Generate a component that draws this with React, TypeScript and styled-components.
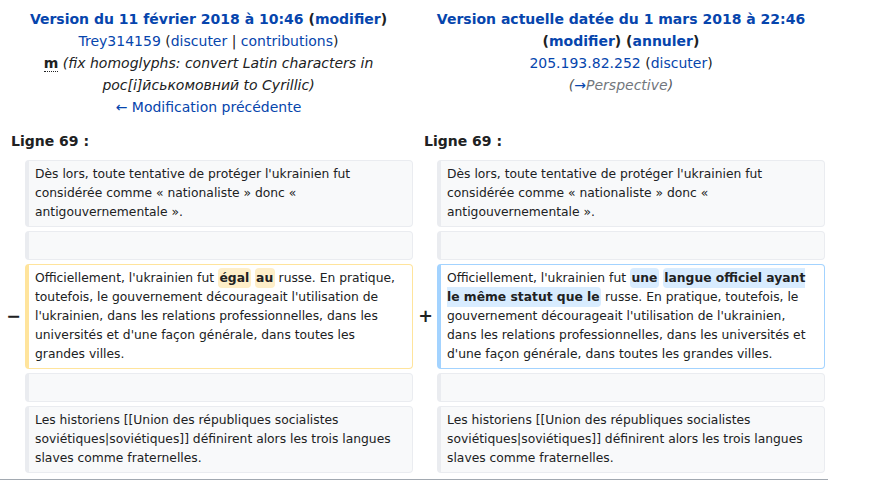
import * as React from "react";
import styled, { createGlobalStyle } from "styled-components";

const GlobalStyle = createGlobalStyle`
  html, body {
    margin: 0;
    padding: 0;
    background: #ffffff;
  }
  body {
    font-family: "DejaVu Sans", "Noto Sans", sans-serif;
    color: #202122;
  }
`;

type LineKind = "context" | "deleted" | "added";

const palette: Record<LineKind, { border: string; accent: string; bg: string; mark: string }> = {
  context: { border: "#eaecf0", accent: "#eaecf0", bg: "#f8f9fa", mark: "transparent" },
  deleted: { border: "#ffe49c", accent: "#ffe49c", bg: "#ffffff", mark: "#feeec8" },
  added: { border: "#a3d3ff", accent: "#a3d3ff", bg: "#ffffff", mark: "#d8ecff" },
};

const DiffGrid = styled.div`
  width: 829px;
  box-sizing: border-box;
  padding: 8px 4px 0;
  display: grid;
  grid-template-columns: 17px 1fr 16px 1fr;
  column-gap: 4px;
  row-gap: 4px;
  align-items: center;
`;

const TitleCell = styled.div`
  grid-column: span 2;
  align-self: start;
  text-align: center;
  font-size: 14px;
  line-height: 22px;
`;

const TitleLine = styled.div`
  display: block;
`;

const Link = styled.a`
  color: #0645ad;
  text-decoration: none;
  cursor: pointer;
`;

const Strong = styled.strong`
  font-weight: bold;
`;

const Minor = styled.abbr`
  font-weight: bold;
  text-decoration: none;
  border-bottom: 1px dotted #202122;
`;

const Comment = styled.span<{ $muted?: boolean }>`
  font-style: italic;
  color: ${(p) => (p.$muted ? "#54595d" : "#202122")};
`;

const AutoComment = styled.span`
  color: #72777d;
`;

const LineNumber = styled.div`
  grid-column: span 2;
  padding: 8px 7px 4px;
  font-size: 14px;
  line-height: 22px;
  font-weight: bold;
`;

const Marker = styled.div`
  text-align: right;
  font-weight: bold;
  font-size: 17.5px;
  line-height: 1.2;
`;

const LineBox = styled.div<{ $kind: LineKind }>`
  box-sizing: border-box;
  padding: 4px 6px;
  font-size: 12.32px;
  line-height: 19px;
  border: 1px solid ${(p) => palette[p.$kind].border};
  border-left: 4px solid ${(p) => palette[p.$kind].accent};
  border-radius: 4px;
  background: ${(p) => palette[p.$kind].bg};
  word-wrap: break-word;
`;

const Change = styled.span<{ $kind: LineKind }>`
  font-weight: bold;
  background: ${(p) => palette[p.$kind].mark};
  border-radius: 4px;
  padding: 3px 1.5px;
`;

const BottomRule = styled.div`
  width: 828px;
  margin-top: 6px;
  border-top: 1px solid #a2a9b1;
`;

const contextBefore =
  "Dès lors, toute tentative de protéger l'ukrainien fut considérée comme « nationaliste » donc « antigouvernementale ».";
const contextAfter =
  "Les historiens [[Union des républiques socialistes soviétiques|soviétiques]] définirent alors les trois langues slaves comme fraternelles.";

const ContextRow: React.FC<{ text?: string }> = ({ text }) => (
  <>
    <Marker />
    <LineBox $kind="context">{text ?? "\u00a0"}</LineBox>
    <Marker />
    <LineBox $kind="context">{text ?? "\u00a0"}</LineBox>
  </>
);

export default function App() {
  return (
    <>
      <GlobalStyle />
      <DiffGrid>
        <TitleCell>
          <TitleLine>
            <Strong>
              <Link>Version du 11 février 2018 à 10:46</Link> (<Link>modifier</Link>)
            </Strong>
          </TitleLine>
          <TitleLine>
            <Link>Trey314159</Link> (<Link>discuter</Link> | <Link>contributions</Link>)
          </TitleLine>
          <TitleLine>
            <Minor title="Modification mineure">m</Minor>{" "}
            <Comment>(fix homoglyphs: convert Latin characters in poc[i]йськомовний to Cyrillic)</Comment>
          </TitleLine>
          <TitleLine>
            <Link>← Modification précédente</Link>
          </TitleLine>
        </TitleCell>
        <TitleCell>
          <TitleLine>
            <Strong>
              <Link>Version actuelle datée du 1 mars 2018 à 22:46</Link> (<Link>modifier</Link>) (
              <Link>annuler</Link>)
            </Strong>
          </TitleLine>
          <TitleLine>
            <Link>205.193.82.252</Link> (<Link>discuter</Link>)
          </TitleLine>
          <TitleLine>
            <Comment $muted>
              (
              <AutoComment>
                <Link>→</Link>Perspective
              </AutoComment>
              )
            </Comment>
          </TitleLine>
        </TitleCell>

        <LineNumber>Ligne 69 :</LineNumber>
        <LineNumber>Ligne 69 :</LineNumber>

        <ContextRow text={contextBefore} />
        <ContextRow />

        <Marker>−</Marker>
        <LineBox $kind="deleted">
          Officiellement, l'ukrainien fut <Change $kind="deleted">égal</Change>{" "}
          <Change $kind="deleted">au</Change> russe. En pratique, toutefois, le gouvernement décourageait
          l'utilisation de l'ukrainien, dans les relations professionnelles, dans les universités et d'une
          façon générale, dans toutes les grandes villes.
        </LineBox>
        <Marker>+</Marker>
        <LineBox $kind="added">
          Officiellement, l'ukrainien fut <Change $kind="added">une</Change>{" "}
          <Change $kind="added">langue officiel ayant le même statut que le</Change> russe. En pratique,
          toutefois, le gouvernement décourageait l'utilisation de l'ukrainien, dans les relations
          professionnelles, dans les universités et d'une façon générale, dans toutes les grandes villes.
        </LineBox>

        <ContextRow />
        <ContextRow text={contextAfter} />
      </DiffGrid>
      <BottomRule />
    </>
  );
}
